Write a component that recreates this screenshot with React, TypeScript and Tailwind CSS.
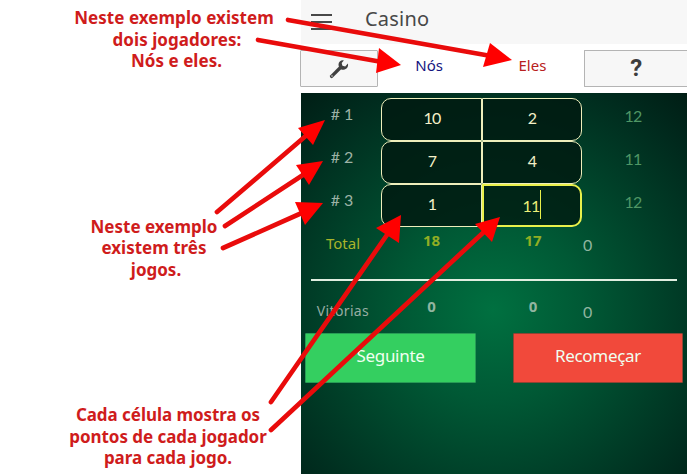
import type { ReactNode } from "react";

const ARROWS = [
  { shaft: [288, 20, 491, 56], head: "512,60 490,43 483,67" },
  { shaft: [258, 40, 382, 62], head: "401,65 379,48 376,73" },
  { shaft: [217, 212, 308, 134], head: "325,120 298,128 313,145" },
  { shaft: [225, 226, 306, 173], head: "323,161 296,165 309,185" },
  { shaft: [223, 248, 304, 212], head: "323,203 295,202 305,225" },
  { shaft: [271, 402, 389, 232], head: "401,215 376,228 399,243" },
  { shaft: [271, 430, 486, 230], head: "500,217 475,224 492,242" },
];

function Arrows() {
  return (
    <svg className="pointer-events-none absolute inset-0" width="687" height="474" viewBox="0 0 687 474">
      {ARROWS.map(({ shaft: [x1, y1, x2, y2], head }) => (
        <g key={head}>
          <line x1={x1} y1={y1} x2={x2} y2={y2} stroke="#e90b0b" strokeWidth="4.7" strokeLinecap="round" />
          <polygon points={head} fill="#ff0000" />
        </g>
      ))}
    </svg>
  );
}

function Note({ className, children }: { className: string; children: ReactNode }) {
  return (
    <div className={`flex flex-col items-center whitespace-nowrap text-[17px] font-bold leading-[21.5px] text-[#cf1c1c] ${className}`}>
      {children}
    </div>
  );
}

const GAMES = [
  { label: "# 1", us: "10", them: "2", sum: "12" },
  { label: "# 2", us: "7", them: "4", sum: "11" },
  { label: "# 3", us: "1", them: "11", sum: "12", editing: true },
];

export default function App() {
  return (
    <div className="relative flex h-[474px] w-[687px] overflow-hidden bg-white font-['Noto_Sans',sans-serif]">
      <aside className="h-full w-[301px] shrink-0">
        <Note className="ml-[46px] w-[256px] pt-[7px] tracking-[0.05px]">
          <span>Neste exemplo existem</span>
          <span className="pl-[6px]">dois jogadores:</span>
          <span className="pl-[5px]">Nós e eles.</span>
        </Note>
        <Note className="ml-[26px] mt-[144px] w-[256px] tracking-[0px]">
          <span>Neste exemplo</span>
          <span>existem três</span>
          <span className="pl-[4px]">jogos.</span>
        </Note>
        <Note className="ml-[40px] mt-[124px] w-[256px] tracking-[-0.05px]">
          <span>Cada célula mostra os</span>
          <span>pontos de cada jogador</span>
          <span>para cada jogo.</span>
        </Note>
      </aside>

      <main className="flex h-full w-[386px] flex-col">
        <header className="flex h-[44px] shrink-0 items-start bg-[#f7f7f7] pl-[10px]">
          <div className="mt-[14px] flex w-[21px] flex-col gap-[5px]">
            <i className="h-[2px] bg-[#484848]" />
            <i className="h-[2px] bg-[#484848]" />
            <i className="h-[2px] bg-[#484848]" />
          </div>
          <h1 className="ml-[33px] mt-[5px] text-[20px] font-normal leading-[28px] tracking-[0.2px] text-[#484848]">Casino</h1>
        </header>

        <div className="flex h-[49px] shrink-0 items-start bg-white pt-[6px] text-[15px]">
          <div className="-ml-px flex h-[37px] w-[78px] items-center justify-center rounded-[1px] border border-[#b4b4b4] bg-[#f7f7f7]">
            <svg width="20" height="20" viewBox="0 0 20 20">
              <path d="M2.600 17.400 12 8" stroke="#404040" strokeWidth="3.4" strokeLinecap="round" />
              <path d="M18.900 4.600 16.200 7.400 13.400 6.700 12.700 4 14.800 1.400C12 .8 9.600 2.800 9.500 5.400c0 3 2.200 5.400 5 5.300 3.200-.1 5.200-3.100 4.400-6.100Z" fill="#404040" />
              <circle cx="3" cy="17" r=".7" fill="#f7f7f7" />
            </svg>
          </div>
          <span className="w-[103px] pt-[4px] text-center leading-[22px] text-[#15157f]">Nós</span>
          <span className="w-[103px] pl-[1px] pt-[4px] text-center leading-[22px] text-[#b82020]">Eles</span>
          <div className="ml-px flex h-[37px] w-[103px] items-center justify-center rounded-l-[1px] border border-r-0 border-[#b4b4b4] bg-[#f7f7f7] pb-[2px] font-[Roboto,sans-serif] text-[24px] font-bold text-[#3c3c3c]">?</div>
        </div>

        <section className="flex min-h-0 flex-1 flex-col bg-[radial-gradient(circle_at_192px_217px,#007040_0px,#005935_90px,#003f28_175px,#002a1d_245px,#001b13_300px)]">
          <div className="mt-[5px] font-[Lato,sans-serif] text-[16px]">
            {GAMES.map((g) => (
              <div key={g.label} className="flex h-[43px] leading-[20px]">
                <span className="w-[80px] pl-[2px] pt-[6px] text-center text-[#9db3a6]">{g.label}</span>
                <span className="flex w-[101px] items-center justify-center rounded-l-[10px] border border-[#eeeebb] bg-[#001a10]/85 pb-[3px] pl-[1px] tracking-[-0.8px] text-[#f4f0c8]">{g.us}</span>
                <span className={g.editing
                  ? "flex w-[100px] items-center justify-center rounded-r-[10px] border-2 border-[#e9f04b] bg-[#001a10]/80 tracking-[-0.8px] text-[#edf078]"
                  : "flex w-[100px] items-center justify-center rounded-r-[10px] border border-[#eeeebb] bg-[#001a10]/85 pb-[3px] tracking-[-0.8px] text-[#f4f0c8]"}>
                  {g.them}
                  {g.editing && <i className="-mt-[2px] ml-[1px] h-[29px] w-px bg-[#e9f04b]" />}
                </span>
                <span className="w-[102px] pt-[8px] text-center tracking-[-0.8px] text-[#4f9665]">{g.sum}</span>
              </div>
            ))}
          </div>

          <div className="flex h-[52px] shrink-0 leading-[20px]">
            <span className="w-[84px] pt-[6px] text-center text-[15px] text-[#a9b42b]">Total</span>
            <span className="w-[93px] pt-[3px] text-center text-[15px] font-bold text-[#91ad24]">18</span>
            <span className="w-[110px] pt-[3px] text-center text-[15px] font-bold text-[#91ad24]">17</span>
            <span className="-ml-[5px] pt-[8px] font-[Lato,sans-serif] text-[16px] text-[#90b5a0]">0</span>
          </div>
          <hr className="mx-[10px] h-[2px] shrink-0 border-0 bg-[#e0eee0]" />
          <div className="flex h-[52px] shrink-0 leading-[20px]">
            <span className="w-[84px] pt-[20px] text-center text-[14px] tracking-[0.35px] text-[#97ada2]">Vitorias</span>
            <span className="w-[93px] pt-[15px] text-center text-[15px] font-bold text-[#91b5a0]">0</span>
            <span className="w-[110px] pt-[15px] text-center text-[15px] font-bold text-[#91b5a0]">0</span>
            <span className="-ml-[5px] pt-[21px] font-[Lato,sans-serif] text-[16px] text-[#90b5a0]">0</span>
          </div>

          <div className="flex justify-between px-[4px] text-[17px] tracking-[-0.3px] text-[#f0fff0]">
            <button className="h-[50px] w-[171px] rounded-[1px] border border-[#279c55] bg-[#34cf60] pb-[5px]">Seguinte</button>
            <button className="h-[50px] w-[170px] rounded-[1px] border border-[#8d4434] bg-[#f1493b] pb-[5px]">Recomeçar</button>
          </div>
        </section>
      </main>
      <Arrows />
    </div>
  );
}
